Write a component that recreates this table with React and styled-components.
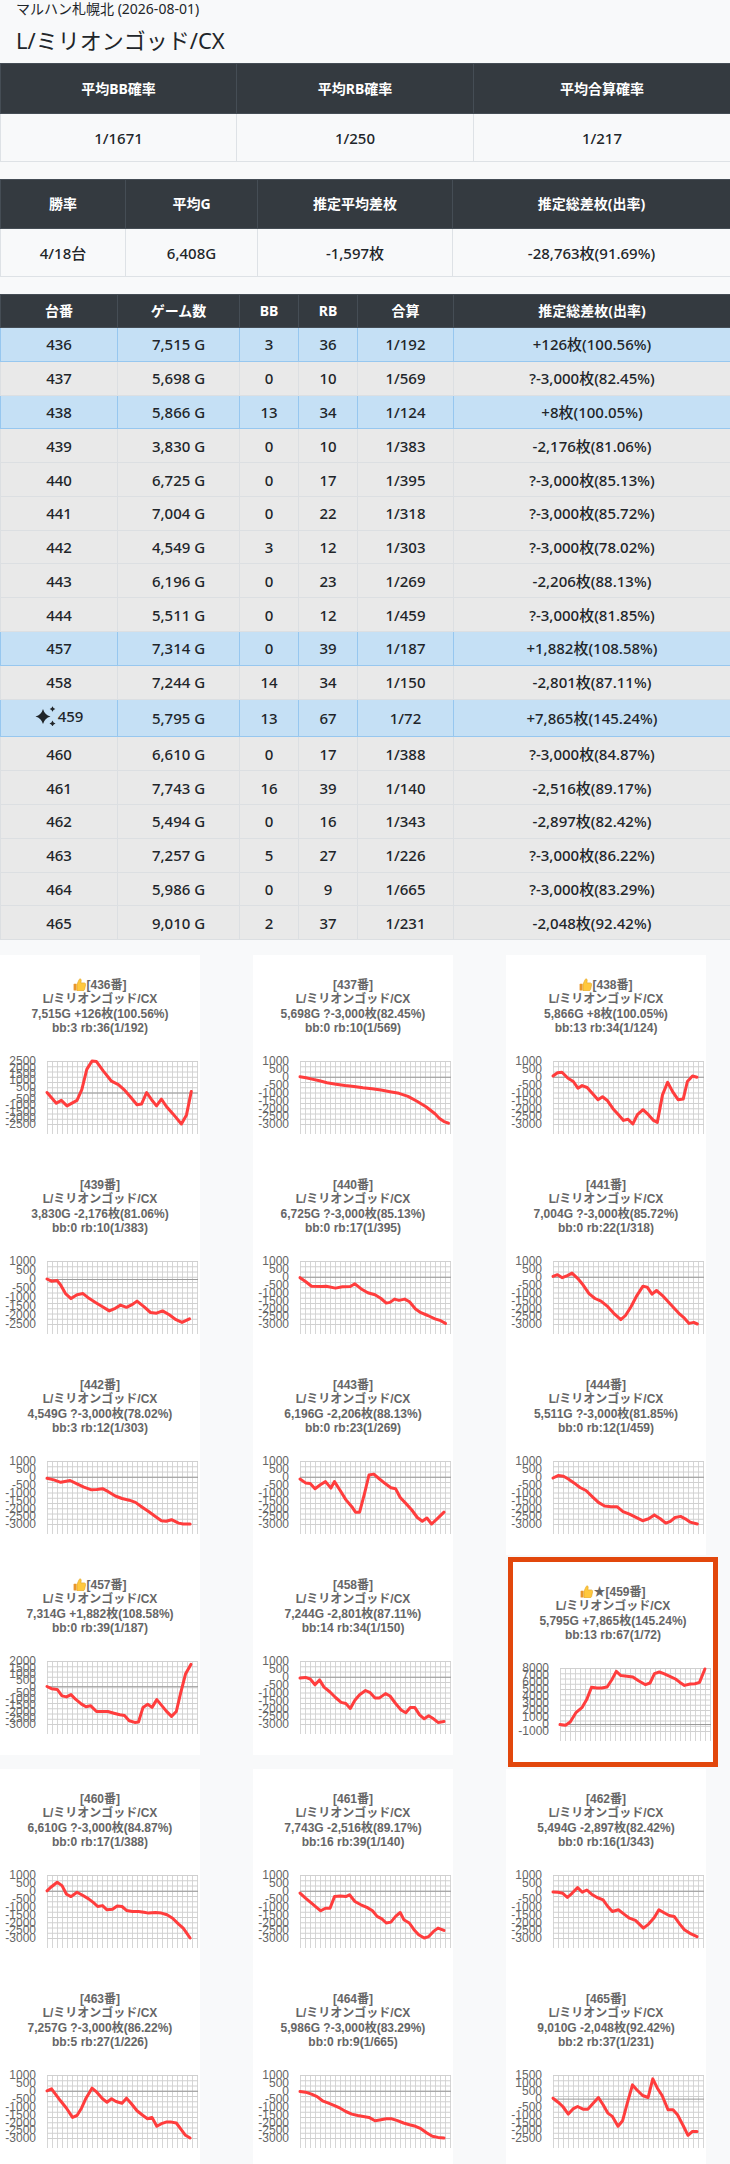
import React from 'react';
import styled, { createGlobalStyle, css } from 'styled-components';

const GlobalStyle = createGlobalStyle`
  html, body {
    margin: 0;
    padding: 0;
    background: #f8f9fa;
  }
  body {
    font-family: "Noto Sans", "Noto Sans CJK JP", sans-serif;
    color: #212529;
  }
`;

// machine rows, chart series are [position 0..1, coins]
const machines = [
  { no: 436, g: '7,515', bb: 3, rb: 36, ratio: '1/192', diff: '+126枚(100.56%)', max: 2500, min: -2500, step: 500,
    pts: [[0, 0], [0.062, -850], [0.095, -630], [0.133, -1060], [0.2, -630], [0.232, 230], [0.265, 1830], [0.3, 2500], [0.33, 2450], [0.376, 1700], [0.43, 900], [0.476, 630], [0.513, 230], [0.553, -300], [0.6, -980], [0.63, -920], [0.664, 0], [0.697, -570], [0.73, -1060], [0.763, -520], [0.796, -1110], [0.84, -1700], [0.896, -2500], [0.93, -1780], [0.962, 90]] },
  { no: 437, g: '5,698', bb: 0, rb: 10, ratio: '1/569', diff: '?-3,000枚(82.45%)', max: 1000, min: -3000, step: 500,
    pts: [[0, 0], [0.04, -60], [0.08, -150], [0.13, -250], [0.18, -380], [0.24, -470], [0.3, -560], [0.36, -620], [0.42, -700], [0.48, -760], [0.54, -850], [0.6, -950], [0.66, -1050], [0.72, -1250], [0.78, -1550], [0.84, -1900], [0.9, -2350], [0.93, -2650], [0.96, -2850], [0.99, -2950]] },
  { no: 438, g: '5,866', bb: 13, rb: 34, ratio: '1/124', diff: '+8枚(100.05%)', max: 1000, min: -3000, step: 500,
    pts: [[0, 50], [0.03, 260], [0.06, 280], [0.1, -100], [0.135, -300], [0.166, -730], [0.194, -560], [0.227, -680], [0.26, -1040], [0.3, -1460], [0.33, -1270], [0.364, -1530], [0.4, -2030], [0.437, -2410], [0.47, -2770], [0.5, -2700], [0.532, -3000], [0.563, -2410], [0.6, -2090], [0.636, -2410], [0.67, -2770], [0.695, -2900], [0.73, -1150], [0.764, -350], [0.797, -940], [0.834, -1460], [0.868, -1420], [0.896, -300], [0.93, 50], [0.96, -30]] },
  { no: 439, g: '3,830', bb: 0, rb: 10, ratio: '1/383', diff: '-2,176枚(81.06%)', max: 1000, min: -2500, step: 500,
    pts: [[0, 0], [0.03, -120], [0.068, -90], [0.09, -320], [0.123, -810], [0.16, -1090], [0.2, -870], [0.24, -810], [0.283, -1090], [0.323, -1300], [0.37, -1540], [0.415, -1770], [0.455, -1630], [0.49, -1450], [0.53, -1570], [0.57, -1410], [0.6, -1230], [0.646, -1540], [0.69, -1860], [0.73, -1900], [0.77, -1770], [0.815, -1990], [0.86, -2260], [0.9, -2410], [0.95, -2210]] },
  { no: 440, g: '6,725', bb: 0, rb: 17, ratio: '1/395', diff: '?-3,000枚(85.13%)', max: 1000, min: -3000, step: 500,
    pts: [[0, -60], [0.037, -300], [0.077, -600], [0.145, -620], [0.175, -600], [0.237, -720], [0.283, -640], [0.335, -620], [0.366, -450], [0.406, -760], [0.452, -1010], [0.5, -1140], [0.54, -1380], [0.575, -1670], [0.6, -1630], [0.63, -1420], [0.66, -1500], [0.698, -1420], [0.73, -1590], [0.77, -2050], [0.806, -2280], [0.852, -2460], [0.9, -2670], [0.938, -2790], [0.97, -2960]] },
  { no: 441, g: '7,004', bb: 0, rb: 22, ratio: '1/318', diff: '?-3,000枚(85.72%)', max: 1000, min: -3000, step: 500,
    pts: [[0, 25], [0.03, 130], [0.062, -60], [0.096, 70], [0.127, 230], [0.164, -100], [0.2, -510], [0.24, -1070], [0.28, -1380], [0.32, -1550], [0.365, -1900], [0.405, -2320], [0.452, -2730], [0.483, -2460], [0.52, -1900], [0.56, -1180], [0.6, -600], [0.628, -660], [0.66, -1110], [0.69, -870], [0.728, -1180], [0.768, -1590], [0.808, -2000], [0.845, -2380], [0.876, -2630], [0.907, -2960], [0.938, -2900], [0.963, -3000]] },
  { no: 442, g: '4,549', bb: 3, rb: 12, ratio: '1/303', diff: '?-3,000枚(78.02%)', max: 1000, min: -3000, step: 500,
    pts: [[0, -100], [0.046, -200], [0.092, -350], [0.154, -240], [0.2, -450], [0.246, -660], [0.292, -820], [0.332, -800], [0.37, -760], [0.406, -930], [0.455, -1220], [0.5, -1380], [0.548, -1490], [0.59, -1630], [0.63, -1900], [0.677, -2210], [0.723, -2520], [0.763, -2790], [0.794, -2830], [0.83, -2730], [0.877, -2940], [0.908, -3000], [0.954, -3000]] },
  { no: 443, g: '6,196', bb: 0, rb: 23, ratio: '1/269', diff: '-2,206枚(88.13%)', max: 1000, min: -3000, step: 500,
    pts: [[0, -140], [0.037, -390], [0.068, -430], [0.1, -760], [0.138, -490], [0.17, -310], [0.206, -720], [0.23, -310], [0.268, -870], [0.305, -1450], [0.345, -1900], [0.37, -2250], [0.397, -2250], [0.43, -1070], [0.46, 110], [0.492, 170], [0.53, -140], [0.57, -450], [0.606, -700], [0.637, -760], [0.668, -1320], [0.705, -1690], [0.745, -2110], [0.782, -2590], [0.815, -2830], [0.846, -2620], [0.877, -3000], [0.914, -2670], [0.96, -2250]] },
  { no: 444, g: '5,511', bb: 0, rb: 12, ratio: '1/459', diff: '?-3,000枚(81.85%)', max: 1000, min: -3000, step: 500,
    pts: [[0, -80], [0.034, 70], [0.07, 30], [0.102, -140], [0.14, -390], [0.18, -680], [0.22, -870], [0.263, -1280], [0.303, -1630], [0.344, -1860], [0.387, -1900], [0.427, -1900], [0.467, -2210], [0.51, -2380], [0.55, -2570], [0.597, -2790], [0.637, -2670], [0.675, -2420], [0.715, -2670], [0.752, -2940], [0.783, -2830], [0.814, -2590], [0.851, -2520], [0.882, -2670], [0.913, -2880], [0.963, -3000]] },
  { no: 457, g: '7,314', bb: 0, rb: 39, ratio: '1/187', diff: '+1,882枚(108.58%)', max: 2000, min: -3000, step: 500,
    pts: [[0, -20], [0.03, -200], [0.068, -250], [0.1, -770], [0.13, -850], [0.16, -670], [0.19, -1030], [0.23, -1420], [0.26, -1630], [0.29, -1550], [0.33, -2010], [0.37, -2010], [0.406, -2010], [0.446, -2140], [0.486, -2270], [0.517, -2320], [0.548, -2740], [0.585, -2870], [0.61, -2840], [0.64, -1680], [0.671, -1440], [0.7, -1680], [0.732, -1060], [0.763, -1500], [0.794, -1960], [0.83, -2400], [0.862, -2010], [0.89, -590], [0.923, 960], [0.96, 1740]] },
  { no: 458, g: '7,244', bb: 14, rb: 34, ratio: '1/150', diff: '-2,801枚(87.11%)', max: 1000, min: -3000, step: 500,
    pts: [[0, -80], [0.037, -40], [0.068, -140], [0.1, -510], [0.13, -200], [0.16, -660], [0.2, -970], [0.237, -1320], [0.274, -1630], [0.305, -1700], [0.335, -2010], [0.366, -1490], [0.397, -1140], [0.437, -870], [0.468, -1010], [0.5, -1340], [0.53, -1340], [0.57, -1070], [0.6, -1220], [0.637, -1700], [0.674, -2110], [0.705, -2280], [0.735, -1960], [0.766, -1960], [0.797, -2420], [0.828, -2670], [0.858, -2480], [0.89, -2670], [0.92, -2900], [0.96, -2840]] },
  { no: 459, g: '5,795', bb: 13, rb: 67, ratio: '1/72', diff: '+7,865枚(145.24%)', max: 8000, min: -1000, step: 1000,
    pts: [[0, -90], [0.037, -190], [0.068, 290], [0.108, 1670], [0.148, 2380], [0.178, 3480], [0.21, 5240], [0.246, 5140], [0.277, 5140], [0.314, 5290], [0.345, 6330], [0.375, 7520], [0.406, 6910], [0.446, 6810], [0.486, 6710], [0.523, 6190], [0.57, 5620], [0.6, 5860], [0.63, 7190], [0.662, 7430], [0.692, 7190], [0.732, 6810], [0.77, 6430], [0.8, 5950], [0.83, 5520], [0.868, 5710], [0.9, 5760], [0.93, 5950], [0.966, 7860]] },
  { no: 460, g: '6,610', bb: 0, rb: 17, ratio: '1/388', diff: '?-3,000枚(84.87%)', max: 1000, min: -3000, step: 500,
    pts: [[0, 0], [0.03, 260], [0.068, 540], [0.1, 330], [0.13, -220], [0.16, -370], [0.2, -90], [0.24, -300], [0.277, -520], [0.31, -750], [0.338, -1000], [0.37, -940], [0.4, -1210], [0.437, -1170], [0.468, -960], [0.5, -1000], [0.53, -1250], [0.57, -1320], [0.61, -1320], [0.646, -1360], [0.677, -1420], [0.723, -1380], [0.763, -1420], [0.8, -1530], [0.837, -1740], [0.877, -2120], [0.908, -2370], [0.954, -3000]] },
  { no: 461, g: '7,743', bb: 16, rb: 39, ratio: '1/140', diff: '-2,516枚(89.17%)', max: 1000, min: -3000, step: 500,
    pts: [[0, -150], [0.037, -470], [0.077, -790], [0.108, -1040], [0.138, -1270], [0.17, -1110], [0.2, -1110], [0.23, -370], [0.268, -330], [0.305, -370], [0.33, -260], [0.366, -680], [0.406, -890], [0.446, -1060], [0.483, -1270], [0.514, -1630], [0.545, -1780], [0.575, -2050], [0.606, -1990], [0.637, -1630], [0.668, -1380], [0.692, -1840], [0.729, -2050], [0.76, -2470], [0.791, -2790], [0.828, -3000], [0.858, -2910], [0.89, -2580], [0.92, -2370], [0.96, -2520]] },
  { no: 462, g: '5,494', bb: 0, rb: 16, ratio: '1/343', diff: '-2,897枚(82.42%)', max: 1000, min: -3000, step: 500,
    pts: [[0, -70], [0.034, -90], [0.065, -160], [0.096, -430], [0.127, -160], [0.164, 200], [0.195, -90], [0.226, 50], [0.257, -220], [0.294, -430], [0.334, -580], [0.365, -1000], [0.396, -1320], [0.436, -1210], [0.473, -1480], [0.51, -1740], [0.55, -1880], [0.603, -2370], [0.637, -2120], [0.675, -1700], [0.706, -1210], [0.737, -1380], [0.774, -1570], [0.808, -1630], [0.845, -2120], [0.876, -2470], [0.913, -2700], [0.96, -2910]] },
  { no: 463, g: '7,257', bb: 5, rb: 27, ratio: '1/226', diff: '?-3,000枚(86.22%)', max: 1000, min: -3000, step: 500,
    pts: [[0, 0], [0.03, 120], [0.06, -260], [0.09, -640], [0.13, -1110], [0.17, -1690], [0.2, -1570], [0.23, -1110], [0.26, -470], [0.3, 160], [0.332, -90], [0.37, -510], [0.4, -730], [0.43, -510], [0.46, -680], [0.5, -790], [0.53, -470], [0.56, -790], [0.6, -1270], [0.64, -1570], [0.67, -1780], [0.7, -1690], [0.732, -2260], [0.763, -2090], [0.794, -1990], [0.83, -1990], [0.862, -2050], [0.89, -2410], [0.923, -2830], [0.954, -3000]] },
  { no: 464, g: '5,986', bb: 0, rb: 9, ratio: '1/665', diff: '?-3,000枚(83.29%)', max: 1000, min: -3000, step: 500,
    pts: [[0, -50], [0.037, -90], [0.077, -220], [0.114, -370], [0.15, -640], [0.19, -790], [0.23, -940], [0.268, -1110], [0.305, -1320], [0.345, -1480], [0.385, -1570], [0.422, -1630], [0.46, -1690], [0.5, -1900], [0.54, -1840], [0.575, -1780], [0.612, -1780], [0.65, -1900], [0.69, -2050], [0.73, -2160], [0.77, -2260], [0.806, -2410], [0.846, -2680], [0.883, -2890], [0.92, -2960], [0.96, -3000]] },
  { no: 465, g: '9,010', bb: 2, rb: 37, ratio: '1/231', diff: '-2,048枚(92.42%)', max: 1500, min: -2500, step: 500,
    pts: [[0, 30], [0.034, -230], [0.065, -500], [0.102, -980], [0.133, -650], [0.164, -500], [0.2, -670], [0.232, -670], [0.263, -350], [0.303, 70], [0.334, -390], [0.365, -920], [0.396, -1130], [0.433, -1760], [0.464, -1400], [0.495, -290], [0.53, 870], [0.56, 550], [0.597, 200], [0.634, 70], [0.665, 1250], [0.696, 660], [0.727, 200], [0.767, -710], [0.8, -710], [0.83, -1030], [0.87, -1760], [0.9, -2330], [0.93, -2080], [0.96, -2080]] },
];

const isPlus = (m) => m.diff.startsWith('+');

const Page = styled.div`
  width: 730px;
`;

const Header = styled.header`
  padding: 0 16px;
`;

const Shop = styled.div`
  font-size: 14px;
  line-height: 18px;
`;

const Title = styled.h1`
  margin: 7px 0 0;
  font-size: 22px;
  line-height: 30px;
  font-weight: 400;
`;

const Table = styled.table`
  width: 730px;
  margin-top: ${(p) => p.$gap}px;
  border-collapse: collapse;
  table-layout: fixed;
`;

const Col = styled.col`
  width: ${(p) => p.$w}px;
`;

const Th = styled.th`
  padding: ${(p) => p.$pad}px 4px;
  background: #343a40;
  color: #fff;
  border: 1px solid #454d55;
  font-size: 14px;
  font-weight: 700;
  line-height: 24px;
  text-align: center;
`;

const Td = styled.td`
  padding: ${(p) => p.$pad}px 4px;
  border: 1px solid #dee2e6;
  font-size: 15px;
  font-weight: 500;
  line-height: 24px;
  text-align: center;
`;

const Row = styled.tr`
  background: ${(p) => (p.$plus ? '#c5e0f5' : '#e9e9e9')};
  & > td {
    border-color: ${(p) => (p.$plus ? '#97c7ef' : '#dcdfe2')};
  }
`;

const NoCell = styled.span`
  display: inline-flex;
  align-items: center;
  gap: 2px;
`;

const Cards = styled.div`
  display: flex;
  flex-wrap: wrap;
  align-items: flex-start;
  column-gap: 53px;
  margin-top: 15px;
`;

const Card = styled.div`
  width: 200px;
  height: 200px;
  background: #fff;
  ${(p) =>
    p.$hot &&
    css`
      margin: 2px;
      border: 5px solid #e2470c;
    `}
`;

const CardTitle = styled.div`
  height: 57px;
  padding-top: 23px;
  text-align: center;
  color: #666;
  font-family: "Liberation Sans", "Noto Sans CJK JP", sans-serif;
  font-size: 12px;
  font-weight: 700;
  line-height: 14.3px;
  white-space: nowrap;
`;

const Thumb = styled.svg`
  width: 13px;
  height: 13px;
  vertical-align: -2px;
`;

const Plot = styled.svg`
  display: block;
  width: 200px;
  height: 120px;
`;

function star(cx, cy, r) {
  const k = r * 0.22;
  return `M${cx} ${cy - r}Q${cx + k} ${cy - k} ${cx + r} ${cy}Q${cx + k} ${cy + k} ${cx} ${cy + r}Q${cx - k} ${cy + k} ${cx - r} ${cy}Q${cx - k} ${cy - k} ${cx} ${cy - r}Z`;
}

function Sparkles() {
  return (
    <svg width="21" height="20" viewBox="0 0 21 20" fill="#212529">
      <path d={star(8, 10.5, 7.5)} />
      <path d={star(17.5, 3, 2.8)} />
      <path d={star(17.5, 17.5, 3)} />
    </svg>
  );
}

function ThumbUp() {
  return (
    <Thumb viewBox="0 0 13 13">
      <rect x="0.6" y="5.8" width="3" height="6.8" rx="0.6" fill="#e8952a" />
      <path
        d="M4 6.2 L6.2 1.4 C6.7 0.5 8.3 0.8 8.2 2.1 L7.9 4.9 H11.2 C12.2 4.9 12.9 5.8 12.6 6.8 L11.6 11.5 C11.4 12.2 10.8 12.7 10.1 12.7 H4 Z"
        fill="#ffc83d"
        stroke="#e3a21f"
        strokeWidth="0.6"
      />
    </Thumb>
  );
}

const X0 = 47;
const X1 = 197;
const Y0 = 26;
const Y1 = 89;
const YB = 99;

function Chart({ m }) {
  const y = (v) => Y0 + ((m.max - v) / (m.max - m.min)) * (Y1 - Y0);
  const x = (t) => X0 + t * (X1 - X0);
  const rows = Array.from({ length: 13 }, (_, i) => Y0 + (i * (Y1 - Y0)) / 12);
  const cols = Array.from({ length: 31 }, (_, i) => X0 + i * 5);
  const labels = [];
  for (let v = m.max; v >= m.min; v -= m.step) labels.push(v);

  return (
    <Plot viewBox="0 0 200 120">
      {cols.map((cx) => (
        <line key={'v' + cx} x1={cx + 0.5} x2={cx + 0.5} y1={Y0} y2={YB} stroke="#d6d6d6" />
      ))}
      {rows.map((ry) => (
        <line key={'h' + ry} x1={X0} x2={X1 + 1} y1={ry + 0.5} y2={ry + 0.5} stroke="#d0d0d0" />
      ))}
      <line x1={X0} x2={X1 + 1} y1={y(0) + 0.5} y2={y(0) + 0.5} stroke="#9a9a9a" />
      {labels.map((v) => (
        <text
          key={v}
          x="36"
          y={y(v)}
          dy="0.36em"
          textAnchor="end"
          fill="#666"
          fontSize="12"
          fontFamily="Liberation Sans, sans-serif"
        >
          {v}
        </text>
      ))}
      <polyline
        points={m.pts.map(([t, v]) => `${x(t).toFixed(1)},${y(v).toFixed(1)}`).join(' ')}
        fill="none"
        stroke="#ff3d3d"
        strokeWidth="3"
        strokeLinejoin="round"
        strokeLinecap="round"
      />
    </Plot>
  );
}

export default function App() {
  return (
    <Page>
      <GlobalStyle />
      <Header>
        <Shop>マルハン札幌北 (2026-08-01)</Shop>
        <Title>L/ミリオンゴッド/CX</Title>
      </Header>

      <Table $gap={8}>
        <colgroup>
          <Col $w={236} />
          <Col $w={237} />
          <Col $w={257} />
        </colgroup>
        <thead>
          <tr>
            <Th $pad={12.5}>平均BB確率</Th>
            <Th $pad={12.5}>平均RB確率</Th>
            <Th $pad={12.5}>平均合算確率</Th>
          </tr>
        </thead>
        <tbody>
          <tr>
            <Td $pad={11.5}>1/1671</Td>
            <Td $pad={11.5}>1/250</Td>
            <Td $pad={11.5}>1/217</Td>
          </tr>
        </tbody>
      </Table>

      <Table $gap={17}>
        <colgroup>
          <Col $w={125} />
          <Col $w={132} />
          <Col $w={195} />
          <Col $w={278} />
        </colgroup>
        <thead>
          <tr>
            <Th $pad={12}>勝率</Th>
            <Th $pad={12}>平均G</Th>
            <Th $pad={12}>推定平均差枚</Th>
            <Th $pad={12}>推定総差枚(出率)</Th>
          </tr>
        </thead>
        <tbody>
          <tr>
            <Td $pad={11.5}>4/18台</Td>
            <Td $pad={11.5}>6,408G</Td>
            <Td $pad={11.5}>-1,597枚</Td>
            <Td $pad={11.5}>-28,763枚(91.69%)</Td>
          </tr>
        </tbody>
      </Table>

      <Table $gap={17}>
        <colgroup>
          <Col $w={117} />
          <Col $w={122} />
          <Col $w={59} />
          <Col $w={59} />
          <Col $w={96} />
          <Col $w={277} />
        </colgroup>
        <thead>
          <tr>
            <Th $pad={4}>台番</Th>
            <Th $pad={4}>ゲーム数</Th>
            <Th $pad={4}>BB</Th>
            <Th $pad={4}>RB</Th>
            <Th $pad={4}>合算</Th>
            <Th $pad={4}>推定総差枚(出率)</Th>
          </tr>
        </thead>
        <tbody>
          {machines.map((m) => (
            <Row key={m.no} $plus={isPlus(m)}>
              <Td $pad={4.4}>
                {m.no === 459 ? (
                  <NoCell>
                    <Sparkles />
                    {m.no}
                  </NoCell>
                ) : (
                  m.no
                )}
              </Td>
              <Td $pad={4.4}>{m.g} G</Td>
              <Td $pad={4.4}>{m.bb}</Td>
              <Td $pad={4.4}>{m.rb}</Td>
              <Td $pad={4.4}>{m.ratio}</Td>
              <Td $pad={4.4}>{m.diff}</Td>
            </Row>
          ))}
        </tbody>
      </Table>

      <Cards>
        {machines.map((m) => (
          <Card key={m.no} $hot={m.no === 459}>
            <CardTitle>
              <div>
                {isPlus(m) && <ThumbUp />}
                {m.no === 459 && '★'}[{m.no}番]
              </div>
              <div>L/ミリオンゴッド/CX</div>
              <div>
                {m.g}G {m.diff}
              </div>
              <div>
                bb:{m.bb} rb:{m.rb}({m.ratio})
              </div>
            </CardTitle>
            <Chart m={m} />
          </Card>
        ))}
      </Cards>
    </Page>
  );
}
